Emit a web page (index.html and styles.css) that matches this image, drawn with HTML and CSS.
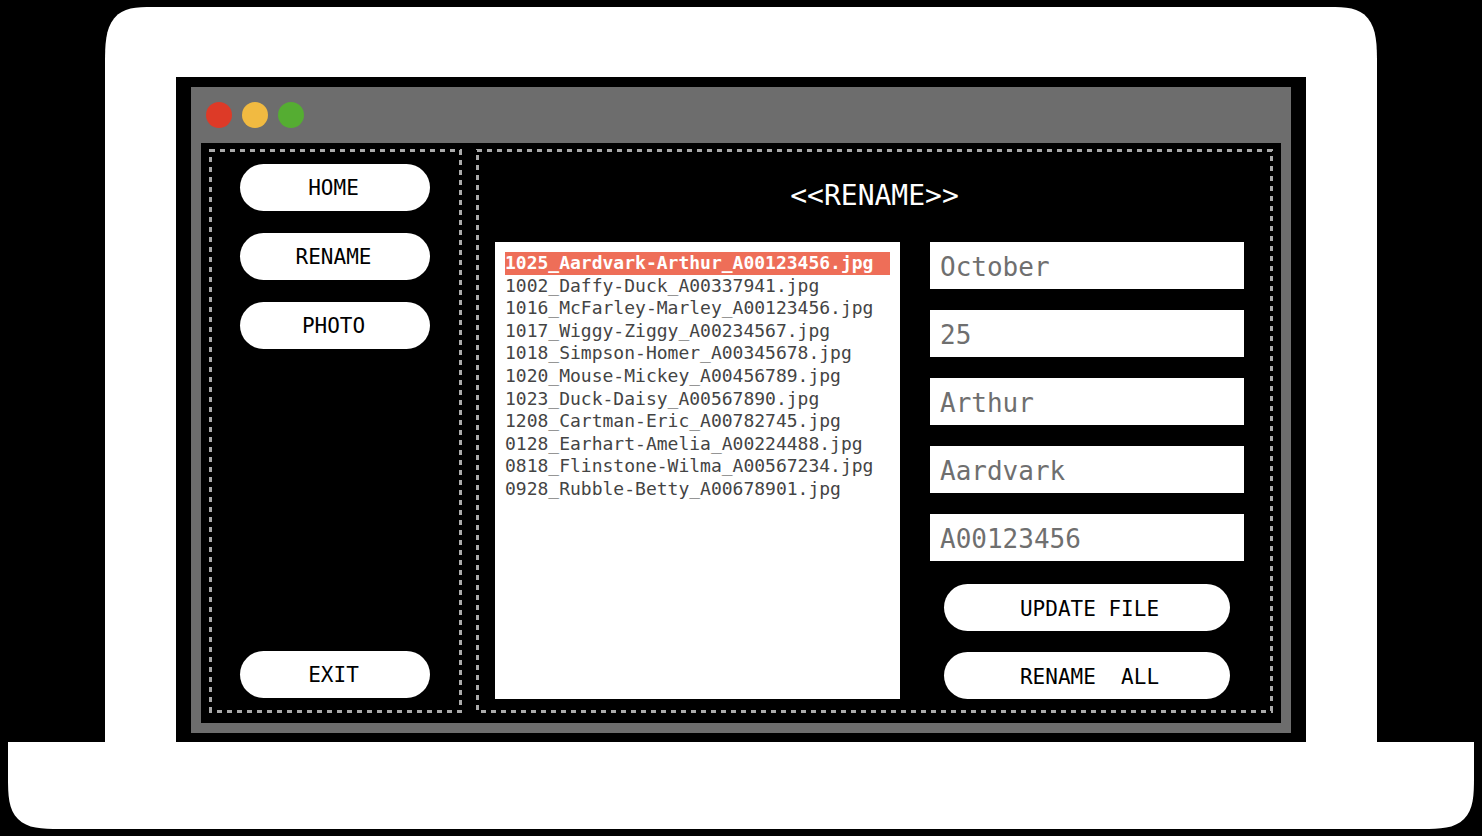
FILE: index.html
```html
<!DOCTYPE html>
<html lang="en">
<head>
<meta charset="utf-8">
<meta name="viewport" content="width=device-width, initial-scale=1">
<title>Rename</title>
<link rel="stylesheet" href="styles.css">
</head>
<body>
<div class="laptop">
  <div class="lid">
    <div class="screen">
      <div class="window">
        <div class="titlebar">
          <span class="dot dot-close"></span>
          <span class="dot dot-minimize"></span>
          <span class="dot dot-zoom"></span>
        </div>
        <div class="content">
          <nav class="panel sidebar" aria-label="Main">
            <button class="pill" type="button">HOME</button>
            <button class="pill" type="button">RENAME</button>
            <button class="pill" type="button">PHOTO</button>
            <button class="pill pill-exit" type="button">EXIT</button>
          </nav>
          <main class="panel main">
            <h1 class="title">&lt;&lt;RENAME&gt;&gt;</h1>
            <div class="workspace">
              <div class="files">
                <ul class="file-list" aria-label="Files">
                  <li class="file-row"><button class="file selected" type="button">1025_Aardvark-Arthur_A00123456.jpg</button></li>
                  <li class="file-row"><button class="file" type="button">1002_Daffy-Duck_A00337941.jpg</button></li>
                  <li class="file-row"><button class="file" type="button">1016_McFarley-Marley_A00123456.jpg</button></li>
                  <li class="file-row"><button class="file" type="button">1017_Wiggy-Ziggy_A00234567.jpg</button></li>
                  <li class="file-row"><button class="file" type="button">1018_Simpson-Homer_A00345678.jpg</button></li>
                  <li class="file-row"><button class="file" type="button">1020_Mouse-Mickey_A00456789.jpg</button></li>
                  <li class="file-row"><button class="file" type="button">1023_Duck-Daisy_A00567890.jpg</button></li>
                  <li class="file-row"><button class="file" type="button">1208_Cartman-Eric_A00782745.jpg</button></li>
                  <li class="file-row"><button class="file" type="button">0128_Earhart-Amelia_A00224488.jpg</button></li>
                  <li class="file-row"><button class="file" type="button">0818_Flinstone-Wilma_A00567234.jpg</button></li>
                  <li class="file-row"><button class="file" type="button">0928_Rubble-Betty_A00678901.jpg</button></li>
                </ul>
              </div>
              <form class="details">
                <input class="field" type="text" aria-label="Month" value="October">
                <input class="field" type="text" aria-label="Day" value="25">
                <input class="field" type="text" aria-label="First name" value="Arthur">
                <input class="field" type="text" aria-label="Last name" value="Aardvark">
                <input class="field" type="text" aria-label="Student number" value="A00123456">
                <div class="actions">
                  <button class="pill pill-action" type="button">UPDATE FILE</button>
                  <button class="pill pill-action" type="button">RENAME  ALL</button>
                </div>
              </form>
            </div>
          </main>
        </div>
      </div>
    </div>
  </div>
  <div class="base"></div>
</div>
</body>
</html>
```

FILE: styles.css
```css
* {
  box-sizing: border-box;
}

body {
  margin: 0;
  background: #000;
  font-family: "DejaVu Sans Mono", "Liberation Mono", monospace;
}

.laptop {
  display: flex;
  flex-direction: column;
  min-height: 100vh;
  padding: 7px 8px;
}

.lid {
  display: flex;
  flex: 1;
  margin: 0 97px;
  padding: 70px 71px 0;
  background: #fff;
  border-radius: 30px 30px 0 0 / 46px 46px 0 0;
}

.base {
  height: 87px;
  background: #fff;
  border-radius: 0 0 36px 36px / 0 0 34px 34px;
}

@supports (corner-shape: superellipse(1.7)) {
  .lid {
    border-radius: 48px 48px 0 0 / 58px 58px 0 0;
    corner-shape: superellipse(1.7);
  }

  .base {
    border-radius: 0 0 52px 52px;
    corner-shape: superellipse(1.7);
  }
}

.screen {
  display: flex;
  flex: 1;
  padding: 10px 15px 9px;
  background: #000;
}

.window {
  display: flex;
  flex: 1;
  flex-direction: column;
  padding: 0 10px 10px;
  background: #6d6d6d;
}

.titlebar {
  display: flex;
  align-items: center;
  gap: 10px;
  height: 56px;
  padding-left: 5px;
}

.dot {
  width: 26px;
  height: 26px;
  border-radius: 50%;
}

.dot-close { background: #dd3a27; }
.dot-minimize { background: #f1ba41; }
.dot-zoom { background: #55ad32; }

.content {
  display: flex;
  flex: 1;
  gap: 14px;
  padding: 6px 8px 10px;
  background: #000;
}

/* Dashed frame with five pixel dashes, one gradient for each side. */
.panel {
  --across: repeating-linear-gradient(90deg, #aaa 0 5px, transparent 5px 10px);
  --down: repeating-linear-gradient(180deg, #aaa 0 5px, transparent 5px 10px);
  display: flex;
  flex-direction: column;
  background-image: var(--across), var(--across), var(--down), var(--down);
  background-repeat: repeat-x, repeat-x, repeat-y, repeat-y;
  background-size: 10px 3px, 10px 3px, 3px 10px, 3px 10px;
}

.sidebar {
  flex: 0 0 253px;
  gap: 22px;
  padding: 15px 32px 15px 31px;
  background-position: 1px 0, 8px 100%, 0 8px, 100% 1px;
}

.main {
  flex: 1;
  min-width: 0;
  padding: 0 29px 14px 19px;
  background-position: 1px 0, 5px 100%, 0 6px, 100% 7px;
}

.pill {
  height: 47px;
  padding: 0 3px 0 0;
  border: 0;
  border-radius: 24px;
  background: #fff;
  color: #000;
  font-family: inherit;
  font-size: 21px;
  line-height: 24px;
  white-space: pre;
  cursor: pointer;
}

.pill-exit {
  margin-top: auto;
}

.title {
  margin: 0;
  padding: 1px 0 0 10px;
  color: #fff;
  font-size: 28px;
  font-weight: 400;
  line-height: 92px;
  text-align: center;
}

.workspace {
  display: grid;
  flex: 1;
  grid-template-columns: 405fr 314fr;
  gap: 30px;
}

.files {
  padding: 10px;
  background: #fff;
}

.file-list {
  display: grid;
  grid-auto-rows: 1fr;
  height: 248px;
  margin: 0;
  padding: 0;
  list-style: none;
}

.file-row {
  display: flex;
}

.file {
  flex: 1;
  padding: 0;
  border: 0;
  background: none;
  color: #444;
  font-family: inherit;
  font-size: 18px;
  line-height: 22px;
  text-align: left;
  white-space: nowrap;
  cursor: pointer;
}

.file.selected {
  background: #ee6e58;
  color: #fff;
  font-weight: 700;
}

.details {
  display: flex;
  flex-direction: column;
  gap: 21px;
}

.field {
  width: 100%;
  height: 47px;
  padding: 3px 10px 0;
  border: 0;
  border-radius: 0;
  background: #fff;
  color: #6f6f6f;
  font-family: inherit;
  font-size: 26px;
}

.actions {
  display: flex;
  flex-direction: column;
  gap: 21px;
  margin-top: auto;
  padding: 0 14px;
}

.pill-action {
  padding: 3px 0 0 5px;
}
```
